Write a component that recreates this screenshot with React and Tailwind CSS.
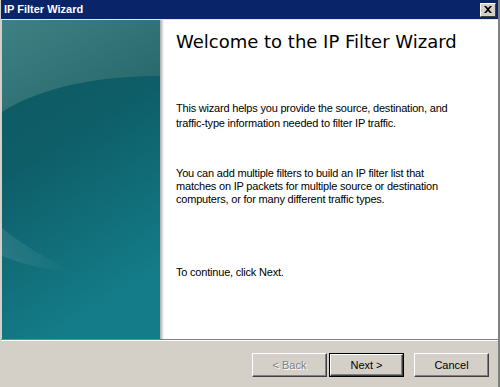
import React from 'react';

const SidePanel = () => (
  <svg width="158" height="320" viewBox="0 0 158 320" className="block">
    <defs>
      <linearGradient id="base" x1="0" y1="0" x2="0.3" y2="1">
        <stop offset="0" stopColor="#0d5760" />
        <stop offset="0.45" stopColor="#0e5e68" />
        <stop offset="1" stopColor="#147c88" />
      </linearGradient>
      <linearGradient id="top" x1="0" y1="0" x2="1" y2="1">
        <stop offset="0" stopColor="#3f8183" />
        <stop offset="1" stopColor="#24646a" />
      </linearGradient>
      <linearGradient id="swoosh" x1="0" y1="0" x2="1" y2="0">
        <stop offset="0" stopColor="#ffffff" stopOpacity="0.1" />
        <stop offset="1" stopColor="#ffffff" stopOpacity="0" />
      </linearGradient>
    </defs>
    <rect width="158" height="320" fill="url(#base)" />
    <path d="M0,0 H158 V56 C100,56 40,66 0,92 Z" fill="url(#top)" />
    <path d="M0,208 C20,225 45,238 70,252 C40,250 15,242 0,236 Z" fill="url(#swoosh)" />
  </svg>
);

const Button = ({ children, disabled, isDefault }) => {
  if (isDefault) {
    return (
      <div className="w-[75px] h-[24px] border border-black">
        <div className="w-full h-full bg-[#d4d0c8] border-t border-l border-white border-r border-b border-r-[#404040] border-b-[#404040] shadow-[inset_-1px_-1px_0_#808080] flex items-center justify-center text-[11px] text-black">
          {children}
        </div>
      </div>
    );
  }
  return (
    <div className="w-[75px] h-[24px] bg-[#d4d0c8] border-t border-l border-white border-r border-b border-r-[#404040] border-b-[#404040] shadow-[inset_-1px_-1px_0_#808080] flex items-center justify-center text-[11px]">
      <span className={disabled ? 'text-[#808080] [text-shadow:1px_1px_0_#fff]' : 'text-black'}>{children}</span>
    </div>
  );
};

export default function App() {
  return (
    <div className="w-[500px] h-[387px] bg-[#d4d0c8] flex flex-col font-['Liberation_Sans',Arial,sans-serif] overflow-hidden border-l border-l-[#d4d0c8] border-r-2 border-r-[#808080]">
      {/* Title bar */}
      <div className="h-[19px] bg-[#0a246a] flex items-center justify-between pl-[3px] pr-[2px]">
        <span className="text-white font-bold text-[11px] leading-none">IP Filter Wizard</span>
        <div className="w-[16px] h-[14px] bg-[#d4d0c8] border-t border-l border-white border-r border-b border-r-[#404040] border-b-[#404040] flex items-center justify-center">
          <svg width="8" height="7" viewBox="0 0 8 7">
            <path d="M0,0 L2,0 L4,2 L6,0 L8,0 L5,3.5 L8,7 L6,7 L4,5 L2,7 L0,7 L3,3.5 Z" fill="#000" />
          </svg>
        </div>
      </div>

      {/* Body */}
      <div className="flex h-[320px] border-t border-t-[#eaeaea]">
        <div className="w-[159px] pl-[1px] border-r border-r-[#9bbcbe]">
          <SidePanel />
        </div>
        <div className="w-[4px] bg-gradient-to-r from-[#a8a8a8] to-white" />
        <div className="flex-1 bg-white pl-[12px] pr-3">
          <h1 className="font-['DejaVu_Sans',Verdana,sans-serif] text-[18px] text-black leading-none mt-[13px]">
            Welcome to the IP Filter Wizard
          </h1>
          <p className="text-[11px] leading-[15px] tracking-[-0.2px] text-black mt-[50px]">
            This wizard helps you provide the source, destination, and
            <br />
            traffic-type information needed to filter IP traffic.
          </p>
          <p className="text-[11px] leading-[13px] tracking-[-0.2px] text-black mt-[36px]">
            You can add multiple filters to build an IP filter list that
            <br />
            matches on IP packets for multiple source or destination
            <br />
            computers, or for many different traffic types.
          </p>
          <p className="text-[11px] leading-[14px] tracking-[-0.2px] text-black mt-[59px]">
            To continue, click Next.
          </p>
        </div>
      </div>

      {/* Divider */}
      <div className="h-[2px] border-t border-t-[#808080] border-b border-b-white" />

      {/* Footer */}
      <div className="flex-1 flex items-start justify-end pt-[12px] pr-[9px]">
        <Button disabled>&lt; Back</Button>
        <div className="ml-[2px]">
          <Button isDefault>Next &gt;</Button>
        </div>
        <div className="ml-[10px]">
          <Button>Cancel</Button>
        </div>
      </div>
    </div>
  );
}
